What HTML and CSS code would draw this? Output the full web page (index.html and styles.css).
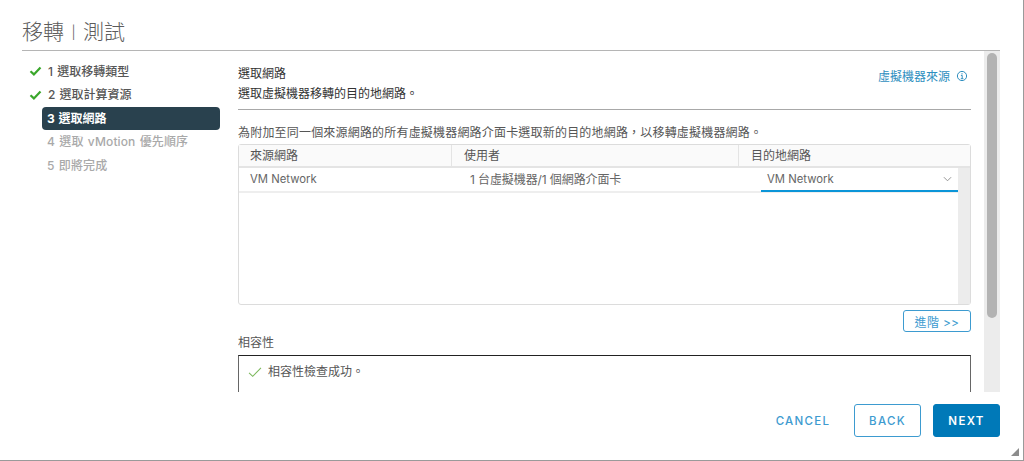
FILE: index.html
```html
<!DOCTYPE html>
<html lang="zh-Hant">
<head>
<meta charset="utf-8">
<title>移轉 | 測試</title>
<link rel="stylesheet" href="styles.css">
</head>
<body>
<div class="dialog">
  <header class="dialog-header"><h1 class="dialog-title">移轉<span class="title-sep">|</span>測試</h1></header>
  <div class="dialog-body">
    <nav class="steps">
      <div class="step done"><svg class="step-check" viewBox="0 0 12 10"><path d="M1 5.2 4.4 8.4 11 1.4" fill="none" stroke="#3aa72b" stroke-width="2.2"/></svg><span>1 選取移轉類型</span></div>
      <div class="step done"><svg class="step-check" viewBox="0 0 12 10"><path d="M1 5.2 4.4 8.4 11 1.4" fill="none" stroke="#3aa72b" stroke-width="2.2"/></svg><span>2 選取計算資源</span></div>
      <div class="step active"><span>3 選取網路</span></div>
      <div class="step pending"><span>4 選取 vMotion 優先順序</span></div>
      <div class="step pending"><span>5 即將完成</span></div>
    </nav>
    <main class="content">
      <div class="content-inner">
        <div class="page-head">
          <div>
            <div class="page-title">選取網路</div>
            <div class="page-sub">選取虛擬機器移轉的目的地網路。</div>
          </div>
          <div class="source-link">虛擬機器來源
            <svg class="info-icon" viewBox="0 0 12 12"><circle cx="6" cy="6" r="4.6" fill="none" stroke="#2f8fc0" stroke-width="1"/><path d="M6 3.2v1.2M4.9 5.4H6.2V8.6M4.8 8.7H7.4" fill="none" stroke="#2f8fc0" stroke-width="1"/></svg>
          </div>
        </div>
        <p class="note">為附加至同一個來源網路的所有虛擬機器網路介面卡選取新的目的地網路，以移轉虛擬機器網路。</p>
        <div class="grid">
          <div class="grid-head">
            <div class="col col-a">來源網路</div>
            <div class="col col-b">使用者</div>
            <div class="col col-c">目的地網路</div>
          </div>
          <div class="grid-main">
            <div class="grid-rows">
              <div class="grid-row">
                <div class="cell cell-a">VM Network</div>
                <div class="cell cell-b">1 台虛擬機器/1 個網路介面卡</div>
                <div class="cell cell-c"><div class="select"><span>VM Network</span><svg class="chev" viewBox="0 0 10 6"><path d="M1 1 5 5 9 1" fill="none" stroke="#8a8a8a" stroke-width="1"/></svg></div></div>
              </div>
            </div>
            <div class="grid-gutter"></div>
          </div>
        </div>
        <div class="adv-row"><button class="adv">進階 &gt;&gt;</button></div>
        <div class="compat-label">相容性</div>
        <div class="compat-box">
          <svg class="compat-check" viewBox="0 0 15 12"><path d="M1 6.4 5 10.2 14 1" fill="none" stroke="#7cb85c" stroke-width="1.2"/></svg>
          <span>相容性檢查成功。</span>
        </div>
      </div>
      <div class="scrollbar"><div class="thumb"></div></div>
    </main>
  </div>
  <footer class="dialog-footer">
    <button class="btn btn-link">CANCEL</button>
    <button class="btn btn-outline">BACK</button>
    <button class="btn btn-primary">NEXT</button>
  </footer>
  <svg class="resize" viewBox="0 0 8 8"><path d="M8 0V8H0Z" fill="#8c8c8c"/></svg>
</div>
</body>
</html>
```
FILE: styles.css
```css
* { box-sizing: border-box; }
html, body { margin: 0; height: 100%; }
body {
  background: #fff;
  font-family: Inter, "Noto Sans CJK TC", sans-serif;
  color: #565656;
  overflow: hidden;
}
.dialog {
  position: relative;
  width: 1024px;
  height: 461px;
  display: flex;
  flex-direction: column;
  border-bottom: 1px solid #9a9a9a;
  border-right: 1px solid #9a9a9a;
}
.dialog-header { height: 51px; padding: 0 23px 0 22px; flex: none; }
.dialog-title {
  margin: 0;
  height: 51px;
  padding-top: 18px;
  font-size: 21px;
  line-height: 28px;
  font-weight: 300;
  color: #5c5c5c;
  border-bottom: 1px solid #b5b5b5;
}
.title-sep { display: inline-block; width: 19px; font-size: 13px; text-align: center; vertical-align: 2px; }
.dialog-body { flex: 1; min-height: 0; display: flex; padding-right: 23px; }
.steps { width: 238px; flex: none; padding: 8.5px 18px 0 26px; }
.step {
  display: flex;
  align-items: center;
  height: 23.5px;
  font-size: 12px;
  font-weight: 500;
  word-spacing: 1px;
  color: #565656;
}
.step span { padding-bottom: 2px; }
.step-check { width: 13px; height: 10px; margin: 0 6px 0 3px; flex: none; }
.step.active {
  margin-left: 16px;
  padding-left: 5px;
  background: #29414e;
  color: #fff;
  border-radius: 4px;
  font-weight: 700;
}
.step.pending { margin-left: 16px; padding-left: 5px; color: #a9a9a9; letter-spacing: .12px; }
.content { flex: 1; min-width: 0; display: flex; overflow: hidden; }
.content-inner { width: 733px; flex: none; padding-top: 13px; }
.page-head {
  display: flex;
  justify-content: space-between;
  height: 46px;
  border-bottom: 1px solid #a8a8a8;
}
.page-title { font-size: 12px; line-height: 20px; color: #333; }
.page-sub { font-size: 12px; line-height: 20px; color: #333; }
.source-link {
  display: flex;
  align-items: center;
  height: 20px;
  margin-top: 1px;
  gap: 6px;
  padding-right: 3px;
  font-size: 12px;
  color: #2f8fc0;
}
.info-icon { width: 12px; height: 12px; margin-top: 2px; }
.note { margin: 15px 0 0; font-size: 12px; line-height: 16px; color: #565656; letter-spacing: .19px; white-space: nowrap; }
.grid {
  height: 161px;
  margin-top: 3px;
  border: 1px solid #dcdcdc;
  border-radius: 3px;
  display: flex;
  flex-direction: column;
}
.grid-head {
  display: flex;
  flex: none;
  height: 23px;
  background: #fafafa;
  border-bottom: 2px solid #e4e4e4;
}
.col {
  font-size: 12px;
  line-height: 21px;
  padding-left: 12px;
  color: #565656;
}
.col-a { width: 212px; padding-left: 11px; }
.col-b { width: 287px; border-left: 1px solid #e4e4e4; }
.col-c { flex: 1; border-left: 1px solid #e4e4e4; }
.grid-main { flex: 1; display: flex; min-height: 0; }
.grid-rows { flex: 1; }
.grid-gutter { width: 16px; background: #ececec; }
.grid-row {
  display: flex;
  height: 25px;
  border-bottom: 2px solid #eee;
  font-size: 11.3px;
  line-height: 23px;
  color: #666;
}
.cell-a { width: 213px; padding-left: 11px; }
.cell-b { width: 281px; padding-left: 18px; font-size: 12px; letter-spacing: -.1px; white-space: nowrap; }
.cell-c { width: 228px; padding-left: 31px; flex: none; margin-left: -3px; }
.select {
  display: flex;
  align-items: center;
  justify-content: space-between;
  width: 197px;
  height: 24px;
  padding: 0 6px 0 6px;
  border-bottom: 2px solid #0b95d8;
  color: #666;
}
.chev { width: 9px; height: 6px; }
.adv-row { display: flex; justify-content: flex-end; margin-top: 5px; }
.adv {
  width: 68px;
  height: 22px;
  padding: 0;
  background: #fff;
  border: 1px solid #3d9bd0;
  border-radius: 3px;
  color: #3d9bd0;
  font: inherit;
  font-size: 12px;
  letter-spacing: .3px;
}
.compat-label { font-size: 12px; line-height: 22px; height: 23px; color: #565656; }
.compat-box {
  display: flex;
  align-items: flex-start;
  height: 60px;
  padding: 8px 9px;
  border-top: 1px solid #222;
  border-left: 1px solid #666;
  border-right: 1px solid #666;
  font-size: 12px;
  line-height: 16px;
  color: #565656;
}
.compat-check { width: 14px; height: 11px; margin: 3px 6px 0 0; flex: none; }
.scrollbar {
  width: 16px;
  margin-left: 13px;
  background: #ececec;
  padding-top: 2px;
  height: 341px;
  flex: none;
}
.thumb { height: 265px; width: 10px; margin: 0 auto; background: #b3b3b3; border-radius: 5px; }
.dialog-footer {
  flex: none;
  height: 68px;
  display: flex;
  align-items: flex-start;
  justify-content: flex-end;
  padding: 12px 23px 0 0;
  gap: 12px;
}
.btn {
  height: 33px;
  padding: 0;
  font-family: Inter, sans-serif;
  font-size: 11.5px;
  font-weight: 500;
  letter-spacing: 1.3px;
  border-radius: 3px;
  border: 1px solid transparent;
}
.btn-link { width: 78px; background: none; color: #3d9bd0; }
.btn-outline { width: 67px; background: #fff; color: #3d9bd0; border-color: #3d9bd0; }
.btn-primary { width: 67px; background: #0079b8; color: #fff; border-color: #0079b8; font-weight: 600; }
.resize { position: absolute; right: 4px; bottom: 4px; width: 8px; height: 8px; }
```
